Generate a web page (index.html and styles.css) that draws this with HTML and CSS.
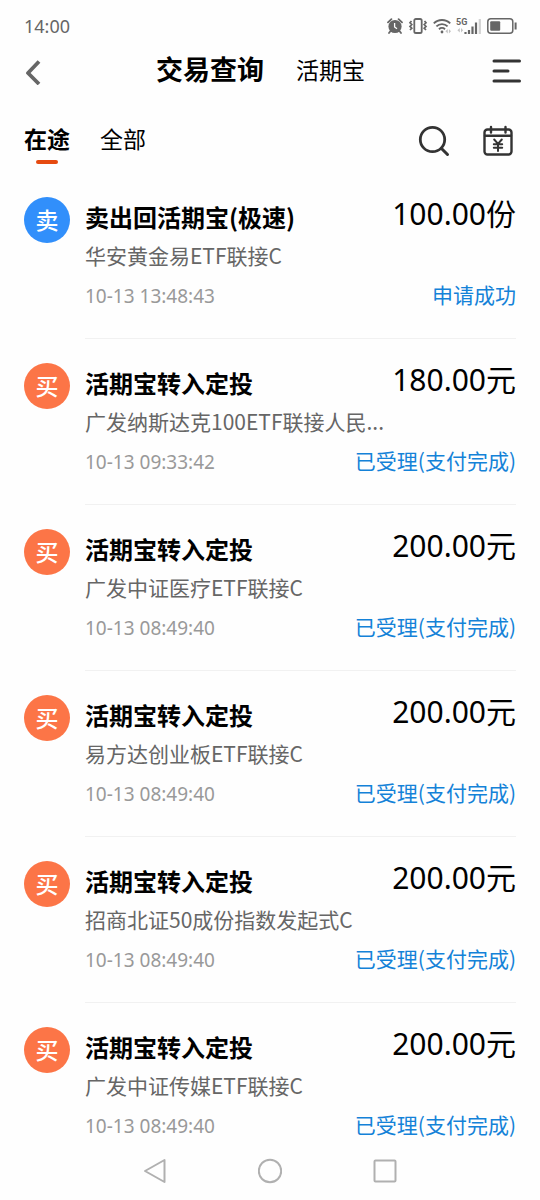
FILE: index.html
```html
<!DOCTYPE html>
<html lang="zh-CN">
<head>
    <meta charset="UTF-8">
    <meta name="viewport" content="width=device-width, initial-scale=1.0">
    <title>交易查询</title>
    <link rel="stylesheet" href="styles.css">
</head>
<body>
    <div class="status-bar">
        <span class="clock">14:00</span>
        <div class="status-icons">
            <svg width="16" height="16" viewBox="0 0 16 16">
                <circle cx="8" cy="8.5" r="6.6" fill="#666"/>
                <path d="M1 4.4 4.4 1.2M15 4.4 11.6 1.2M3.5 13 2 15M12.5 13 14 15" stroke="#666" stroke-width="1.8" stroke-linecap="round"/>
                <path d="M7.6 5v4l2.4 1.8" stroke="#fff" stroke-width="1.3" fill="none"/>
            </svg>
            <svg width="20" height="16" viewBox="0 0 20 16" fill="none" stroke="#666">
                <rect x="6.3" y="1" width="7.4" height="14" rx="1.6" stroke-width="1.8"/>
                <path d="M3.5 3 2 4.8l1.8 1.8L2 8.4l1.8 1.8L2 12M16.5 3 18 4.8l-1.8 1.8L18 8.4l-1.8 1.8L18 12" stroke-width="1.7"/>
            </svg>
            <svg width="18" height="16" viewBox="0 0 18 16" fill="none" stroke="#666" stroke-width="1.9">
                <path d="M.8 5.4a11.6 11.6 0 0 1 16.4 0M3.4 8.4a8 8 0 0 1 11.2 0M6 11.2a4.4 4.4 0 0 1 6 0"/>
                <circle cx="9" cy="14" r="1.4" fill="#666" stroke="none"/>
                <path d="m14.8 11-2.4 2.2 2.4 2.2zM15.9 11l2.1 2.2-2.1 2.2z" fill="#c4c4c4" stroke="none"/>
            </svg>
            <svg width="26" height="18" viewBox="0 0 26 18">
                <text class="network" x="0" y="8">5G</text>
                <path d="m3.8 11-2.4 2.2 2.4 2.2zM5 11l2.1 2.2L5 15.4z" fill="#c4c4c4"/>
                <path d="M9.5 15v2M13 13v4M16.5 9.5V17M20 5.5V17" stroke="#666" stroke-width="2.2"/>
                <path d="M23.8 2v15" stroke="#d2d2d2" stroke-width="2.2"/>
            </svg>
            <svg width="31" height="16" viewBox="0 0 31 16">
                <rect x=".8" y=".8" width="25" height="14.4" rx="3" fill="none" stroke="#666" stroke-width="1.5"/>
                <rect x="3.2" y="3.2" width="10" height="9.6" rx="1" fill="#666"/>
                <path d="M28.6 4.5v7" stroke="#666" stroke-width="2"/>
            </svg>
        </div>
    </div>

    <header class="header">
        <button class="back" aria-label="返回">
            <svg width="20" height="28" viewBox="0 0 20 28"><path d="M15 4.5 4 16l11 11" fill="none" stroke="#666" stroke-width="3.8" stroke-linejoin="round"/></svg>
        </button>
        <div class="header-titles">
            <h1>交易查询</h1>
            <a class="header-link" href="#">活期宝</a>
        </div>
        <button class="menu" aria-label="菜单">
            <svg width="29" height="24" viewBox="0 0 29 24"><path d="M2 2h25.5M2 12h14M2 22h25.5" stroke="#333" stroke-width="3" stroke-linecap="round"/></svg>
        </button>
    </header>

    <div class="toolbar">
        <button class="tab active">在途</button>
        <button class="tab">全部</button>
        <div class="tools">
            <button aria-label="搜索">
                <svg width="32" height="32" viewBox="0 0 32 32" fill="none" stroke="#333" stroke-linecap="round">
                    <circle cx="14.5" cy="14.5" r="12.2" stroke-width="2.8"/>
                    <path d="m23.5 23.5 6 6" stroke-width="3"/>
                </svg>
            </button>
            <button aria-label="日期">
                <svg width="32" height="32" viewBox="0 0 32 32" fill="none" stroke="#333" stroke-width="2.4" stroke-linecap="round">
                    <rect x="2.5" y="4.5" width="27" height="25" rx="3"/>
                    <path d="M3 10.7h26M9 2v5.5M23.5 2v5.5"/>
                    <path d="m12.2 14.5 3.8 4.3 3.8-4.3M11.8 19.2h8.4M11.8 22.7h8.4M16 19v7" stroke-width="2"/>
                </svg>
            </button>
        </div>
    </div>

    <main class="content">
        <ul class="records">
            <li class="record">
                <span class="badge sell">卖</span>
                <div class="detail">
                    <div class="line"><h2>卖出回活期宝(极速)</h2><span class="amount">100.00份</span></div>
                    <p class="fund">华安黄金易ETF联接C</p>
                    <div class="line meta"><time>10-13 13:48:43</time><span class="state">申请成功</span></div>
                </div>
            </li>
            <li class="record">
                <span class="badge buy">买</span>
                <div class="detail">
                    <div class="line"><h2>活期宝转入定投</h2><span class="amount">180.00元</span></div>
                    <p class="fund">广发纳斯达克100ETF联接人民...</p>
                    <div class="line meta"><time>10-13 09:33:42</time><span class="state">已受理(支付完成)</span></div>
                </div>
            </li>
            <li class="record">
                <span class="badge buy">买</span>
                <div class="detail">
                    <div class="line"><h2>活期宝转入定投</h2><span class="amount">200.00元</span></div>
                    <p class="fund">广发中证医疗ETF联接C</p>
                    <div class="line meta"><time>10-13 08:49:40</time><span class="state">已受理(支付完成)</span></div>
                </div>
            </li>
            <li class="record">
                <span class="badge buy">买</span>
                <div class="detail">
                    <div class="line"><h2>活期宝转入定投</h2><span class="amount">200.00元</span></div>
                    <p class="fund">易方达创业板ETF联接C</p>
                    <div class="line meta"><time>10-13 08:49:40</time><span class="state">已受理(支付完成)</span></div>
                </div>
            </li>
            <li class="record">
                <span class="badge buy">买</span>
                <div class="detail">
                    <div class="line"><h2>活期宝转入定投</h2><span class="amount">200.00元</span></div>
                    <p class="fund">招商北证50成份指数发起式C</p>
                    <div class="line meta"><time>10-13 08:49:40</time><span class="state">已受理(支付完成)</span></div>
                </div>
            </li>
            <li class="record">
                <span class="badge buy">买</span>
                <div class="detail">
                    <div class="line"><h2>活期宝转入定投</h2><span class="amount">200.00元</span></div>
                    <p class="fund">广发中证传媒ETF联接C</p>
                    <div class="line meta"><time>10-13 08:49:40</time><span class="state">已受理(支付完成)</span></div>
                </div>
            </li>
        </ul>
    </main>

    <nav class="system-nav">
        <button aria-label="后退">
            <svg width="24" height="26" viewBox="0 0 24 26"><path d="M21.5 2v22L2 13z"/></svg>
        </button>
        <button aria-label="主页">
            <svg width="24" height="26" viewBox="0 0 24 26"><circle cx="12" cy="13" r="11.2"/></svg>
        </button>
        <button aria-label="最近任务">
            <svg width="24" height="26" viewBox="0 0 24 26"><rect x="1.5" y="2.5" width="21" height="21" rx="1"/></svg>
        </button>
    </nav>
</body>
</html>
```
FILE: styles.css
```css
* {
    box-sizing: border-box;
}
body {
    margin: 0;
    height: 100vh;
    display: flex;
    flex-direction: column;
    background-color: #fefefe;
    color: #000;
    font-family: "Noto Sans CJK SC", sans-serif;
}
h1, h2, p, ul {
    margin: 0;
    padding: 0;
}
button {
    padding: 0;
    border: none;
    background: none;
    color: inherit;
    font-family: inherit;
    cursor: pointer;
}
svg {
    display: block;
}

.status-bar {
    display: flex;
    justify-content: space-between;
    align-items: center;
    height: 44px;
    padding: 8px 22px 0 24px;
}
.clock {
    font-family: "Noto Sans", sans-serif;
    font-size: 18px;
    line-height: 24px;
    color: #666;
}
.status-icons {
    display: flex;
    align-items: center;
    gap: 5px;
}
.network {
    font-family: Roboto, sans-serif;
    font-size: 9px;
    font-weight: bold;
    fill: #666;
}

.header {
    display: flex;
    align-items: center;
    height: 54px;
    padding: 0 19px 0 24px;
}
.back {
    width: 20px;
}
.menu {
    display: flex;
    justify-content: flex-end;
    width: 44px;
}
.header-titles {
    flex: 1;
    display: flex;
    justify-content: center;
    align-items: center;
    gap: 32px;
    padding-bottom: 4px;
}
.header-titles h1 {
    font-size: 27px;
    line-height: 40px;
}
.header-link {
    font-size: 23px;
    line-height: 40px;
    color: #000;
    text-decoration: none;
}

.toolbar {
    display: flex;
    align-items: center;
    gap: 30px;
    height: 75px;
    padding: 4px 26px 0 24px;
}
.tab {
    position: relative;
    font-size: 23px;
    line-height: 40px;
}
.tab.active {
    font-weight: bold;
}
.tab.active::after {
    content: "";
    position: absolute;
    left: 50%;
    bottom: -6px;
    width: 22px;
    height: 4px;
    margin-left: -11px;
    border-radius: 2px;
    background-color: #e64a10;
}
.tools {
    display: flex;
    gap: 32px;
    margin-top: 6px;
    margin-left: auto;
}

.content {
    flex: 1;
    min-height: 0;
    overflow-y: auto;
    scrollbar-width: none;
}
.records {
    list-style: none;
}
.record {
    display: flex;
    gap: 15px;
    padding: 0 24px;
}
.badge {
    flex: none;
    width: 46px;
    height: 46px;
    margin-top: 24px;
    border-radius: 50%;
    color: #fff;
    font-size: 23px;
    font-weight: 500;
    line-height: 44px;
    text-align: center;
}
.sell {
    background-color: #318ffb;
}
.buy {
    background-color: #fc7547;
}
.detail {
    flex: 1;
    min-width: 0;
    padding: 24px 0;
    border-bottom: 1px solid #f1f1f1;
}
.line {
    display: flex;
    justify-content: space-between;
    height: 39px;
}
.meta {
    align-items: baseline;
}
.line h2 {
    font-size: 24px;
    line-height: 39px;
}
.amount {
    font-family: "Noto Sans", "Noto Sans CJK SC", sans-serif;
    font-size: 30px;
    line-height: 34px;
}
.fund {
    font-size: 21px;
    line-height: 39px;
    color: #666;
}
.line time {
    font-family: "Noto Sans", sans-serif;
    font-size: 19px;
    line-height: 39px;
    color: #999;
}
.state {
    font-size: 21px;
    line-height: 39px;
    color: #1482d8;
}

.system-nav {
    flex: none;
    display: flex;
    justify-content: center;
    align-items: center;
    gap: 91px;
    height: 58px;
    background-color: #fefefe;
}
.system-nav svg {
    fill: none;
    stroke: #b0b0b0;
    stroke-width: 2;
    stroke-linejoin: round;
}
```
